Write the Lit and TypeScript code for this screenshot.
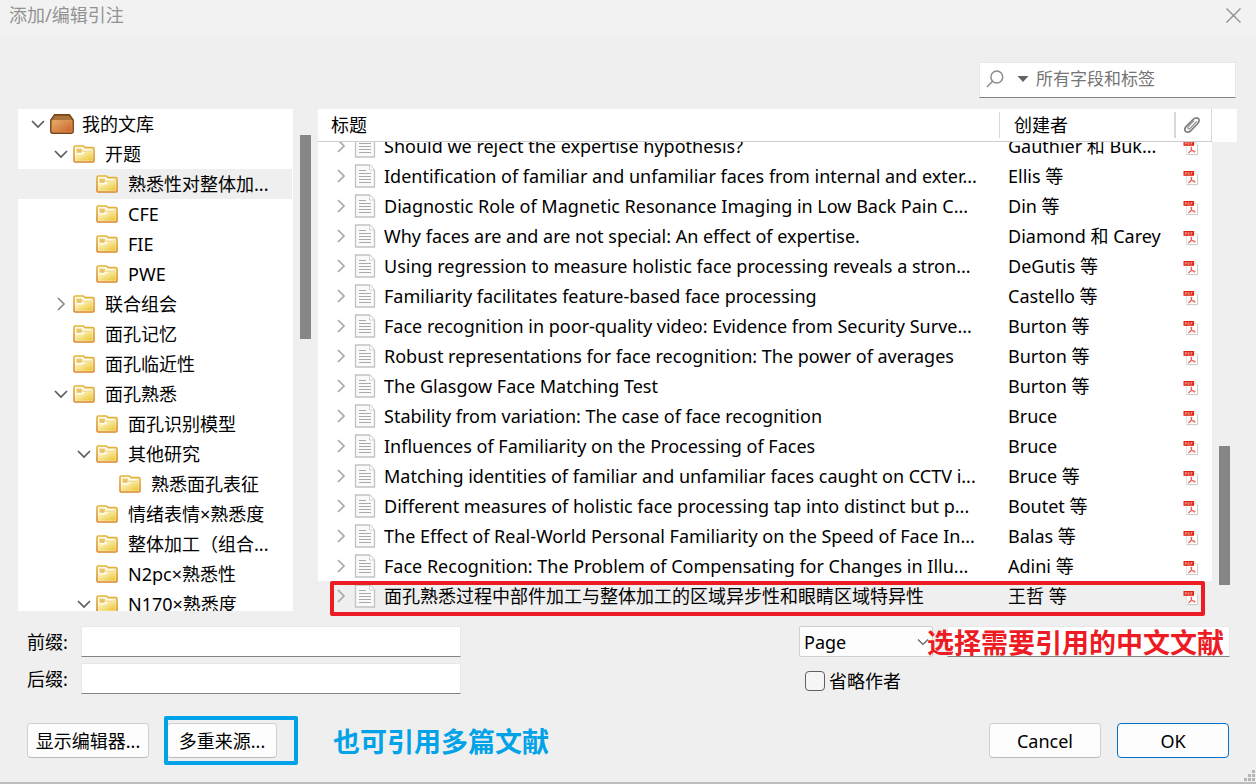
import { LitElement, html, css, svg, nothing } from "lit";
import { customElement, query } from "lit/decorators.js";
import { classMap } from "lit/directives/class-map.js";
import { styleMap } from "lit/directives/style-map.js";

interface TreeNode {
  label: string;
  level: number;
  state?: "open" | "closed";
  library?: boolean;
  selected?: boolean;
}

interface Item {
  title: string;
  creator: string;
  selected?: boolean;
}

const TREE: TreeNode[] = [
  { label: "我的文库", level: 0, state: "open", library: true },
  { label: "开题", level: 1, state: "open" },
  { label: "熟悉性对整体加...", level: 2, selected: true },
  { label: "CFE", level: 2 },
  { label: "FIE", level: 2 },
  { label: "PWE", level: 2 },
  { label: "联合组会", level: 1, state: "closed" },
  { label: "面孔记忆", level: 1 },
  { label: "面孔临近性", level: 1 },
  { label: "面孔熟悉", level: 1, state: "open" },
  { label: "面孔识别模型", level: 2 },
  { label: "其他研究", level: 2, state: "open" },
  { label: "熟悉面孔表征", level: 3 },
  { label: "情绪表情×熟悉度", level: 2 },
  { label: "整体加工（组合...", level: 2 },
  { label: "N2pc×熟悉性", level: 2 },
  { label: "N170×熟悉度", level: 2, state: "open" },
];

const ITEMS: Item[] = [
  { title: "Should we reject the expertise hypothesis?", creator: "Gauthier 和 Buk..." },
  { title: "Identification of familiar and unfamiliar faces from internal and exter...", creator: "Ellis 等" },
  { title: "Diagnostic Role of Magnetic Resonance Imaging in Low Back Pain C...", creator: "Din 等" },
  { title: "Why faces are and are not special: An effect of expertise.", creator: "Diamond 和 Carey" },
  { title: "Using regression to measure holistic face processing reveals a stron...", creator: "DeGutis 等" },
  { title: "Familiarity facilitates feature-based face processing", creator: "Castello 等" },
  { title: "Face recognition in poor-quality video: Evidence from Security Surve...", creator: "Burton 等" },
  { title: "Robust representations for face recognition: The power of averages", creator: "Burton 等" },
  { title: "The Glasgow Face Matching Test", creator: "Burton 等" },
  { title: "Stability from variation: The case of face recognition", creator: "Bruce" },
  { title: "Influences of Familiarity on the Processing of Faces", creator: "Bruce" },
  { title: "Matching identities of familiar and unfamiliar faces caught on CCTV i...", creator: "Bruce 等" },
  { title: "Different measures of holistic face processing tap into distinct but p...", creator: "Boutet 等" },
  { title: "The Effect of Real-World Personal Familiarity on the Speed of Face In...", creator: "Balas 等" },
  { title: "Face Recognition: The Problem of Compensating for Changes in Illu...", creator: "Adini 等" },
  { title: "面孔熟悉过程中部件加工与整体加工的区域异步性和眼睛区域特异性", creator: "王哲 等", selected: true },
];

const chevronDown = html`<svg width="16" height="16" viewBox="0 0 16 16" fill="none" stroke="#5c5c5c" stroke-width="1.7">
  <path d="M2 5l6 6 6-6" />
</svg>`;

const chevronRight = (color: string) => html`<svg width="16" height="16" viewBox="0 0 16 16" fill="none">
  <path d="M5 2l6 6-6 6" stroke=${color} stroke-width="1.7" />
</svg>`;

const libraryIcon = html`<svg width="24" height="20" viewBox="0 0 24 20">
  <defs>
    <linearGradient id="box" x1="0" y1="0" x2="1" y2="1">
      <stop offset="0" stop-color="#e8b06a" /><stop offset="1" stop-color="#c9622b" />
    </linearGradient>
  </defs>
  <path d="M4.500.7h15L23.300 6v11.500a1.800 1.800 0 0 1-1.800 1.800h-19A1.800 1.800 0 0 1 .7 17.500V6z" fill="#8c5620" stroke="#774415" stroke-width="1.200" />
  <path d="M5 2h14l2.200 3H2.800z" fill="#a8733c" />
  <rect x="2" y="6" width="20" height="12" rx="0.8" fill="url(#box)" stroke="#dc9455" stroke-width="0.9" />
</svg>`;

const folderIcon = html`<svg width="22" height="18" viewBox="0 0 22 18">
  <defs>
    <linearGradient id="fill" x1="0" y1="0" x2="1" y2="1">
      <stop offset="0.2" stop-color="#fdf0b8" /><stop offset="1" stop-color="#e8c42c" />
    </linearGradient>
    <linearGradient id="edge" x1="0" y1="0" x2="0" y2="1">
      <stop offset="0" stop-color="#e3b53c" /><stop offset="1" stop-color="#db8428" />
    </linearGradient>
  </defs>
  <path d="M1 2.200Q1 1 2.200 1h8.300l1.500 1.600h7.800Q21 2.600 21 3.800v12q0 1.200-1.200 1.200H2.200Q1 17 1 15.800z" fill="#fffbe6" stroke="url(#edge)" stroke-width="1.600" />
  <path d="M2.300 9.500h7.200L12 7h7.700v8.700H2.300z" fill="url(#fill)" />
  <path d="M3.300 4h5.400v2.200H19v-2" fill="none" stroke="#edcf74" />
  <rect x="3.500" y="4.200" width="5" height="3.600" fill="#e8c168" />
</svg>`;

const documentIcon = html`<svg width="22" height="24" viewBox="0 0 22 24">
  <path d="M1.500 1h14l5 5v17h-19z" fill="#fafafa" stroke="#c2c2c2" stroke-width="1.300" />
  <path d="M15.500 1v5h5" fill="#fff" stroke="#cfcfcf" />
  <path d="M5 6.500h7M5 9.500h12M5 12.500h12M5 15.500h12M5 18.500h12" stroke="#a9a9a9" stroke-width="1.200" />
</svg>`;

const pdfIcon = html`<svg width="16" height="16" viewBox="0 0 16 16">
  <path d="M3 1h8l4 3.500V15H3z" fill="#fff" />
  <path d="M11 1l4 3.500h-4z" fill="#e8e8e8" />
  <path d="M14.600 4.500V14.600H3.500" fill="none" stroke="#c9c9c9" />
  <path d="M3.500 6v8.500" stroke="#e3e3e3" />
  <rect x="0.500" y="1" width="10.500" height="4.800" fill="#e0200f" />
  <path d="M2.200 4.800V2.400h1.300v1.300H2.200M5 2.400v2.200h1q.7-1.100 0-2.200zM8 4.800V2.400h1.500M8 3.700h1.200" fill="none" stroke="#f8b4ac" stroke-width="0.7" />
  <path d="M8.300 7c1 0 .3 1.700-.2 3S6.600 13 5.700 12.900s.8-1.700 2.600-2.100 4 .2 3.900 1-2.300 0-3.300-1.700S7.700 7 8.300 7z" fill="none" stroke="#ea4a3e" stroke-width="0.9" />
</svg>`;

const clipIcon = html`<svg width="20" height="20" viewBox="0 0 20 20" fill="none" stroke-linecap="round">
  <path d="M4.800 10.800L11.200 4.300q3-2.600 5.200-.7 1.700 2.200-.8 5.200l-7.200 7.200q-2.600 2.200-4.800.4Q1.800 14 4 11.600l6.900-6.800" stroke="#808080" stroke-width="1.700" />
  <path d="M14.600 6.800l-6.500 6.600q-1.500 1-2.100 0-.7-1 .5-2.200l5.200-5.200" stroke="#989898" stroke-width="1.300" />
</svg>`;

@customElement("app-root")
export class AppRoot extends LitElement {
  @query(".viewport") private viewport!: HTMLElement;

  static styles = css`
    :host {
      display: flex;
      flex-direction: column;
      height: 100vh;
      min-height: 480px;
      overflow: hidden;
      box-sizing: border-box;
      background: #efefef;
      color: #000;
      font: 18px/30px "Noto Sans", "Noto Sans CJK SC", sans-serif;
    }
    * { box-sizing: border-box; }
    svg { display: block; flex: none; }
    button, input, select { font: inherit; color: inherit; margin: 0; }

    .titlebar {
      display: flex;
      justify-content: space-between;
      align-items: center;
      height: 37px;
      padding: 0 14px 7px 9px;
      background: #f2f2f2;
      color: #929292;
    }
    .titlebar h1 { margin: 0; font-size: 18px; font-weight: 400; }
    .close { border: 0; padding: 0; background: none; }

    .toolbar { display: flex; justify-content: flex-end; padding: 25px 20px 11px; }
    .search {
      display: flex;
      align-items: center;
      width: 257px;
      height: 36px;
      padding: 0 0 2px 6px;
      background: #fff;
      border: 1px solid #e8e8e8;
      border-bottom-color: #848484;
    }
    .search .arrow { margin: 0 6px 0 12px; }
    .search input {
      flex: 1;
      min-width: 0;
      border: 0;
      padding: 0;
      outline: 0;
      background: none;
      font-size: 17px;
    }
    .search input::placeholder { color: #757575; opacity: 1; }

    .panes { display: flex; flex: 1; min-height: 0; padding: 0 19px 0 18px; }
    .tree {
      flex: none;
      width: 275px;
      margin: 0;
      padding: 0 1px 0 0;
      list-style: none;
      overflow: hidden;
      background: #fff;
    }
    .node { display: flex; align-items: center; height: 30px; padding-left: 12px; white-space: nowrap; }
    .node.selected { background: #efefef; }
    .twisty { flex: none; width: 16px; height: 16px; margin-right: 4px; }
    .icon { flex: none; width: 24px; margin-right: 8px; }

    .track { display: flex; flex-direction: column; flex: none; width: 25px; padding: 26px 7px 0; }
    .thumb { width: 11px; height: 204px; background: #868686; }

    .list { position: relative; display: flex; flex: 1; min-width: 0; }
    .viewport { flex: 1; min-width: 0; overflow: hidden; background: #fff; }
    table { width: 100%; table-layout: fixed; border-collapse: separate; border-spacing: 0; }
    .col-creator { width: 176px; }
    .col-file { width: 36px; }
    th {
      position: sticky;
      top: 0;
      z-index: 1;
      height: 33px;
      padding: 0;
      background: #fff;
      border-bottom: 1px solid #cdcdcd;
      font-weight: 400;
      text-align: left;
    }
    .head { display: flex; align-items: center; height: 26px; padding-left: 13px; border-right: 1px solid #d8d8d8; }
    .head.wide { border-right-width: 2px; padding-left: 14px; }
    .head.file { padding-left: 6px; height: 32px; }
    td { height: 30px; padding: 0; overflow: hidden; white-space: nowrap; }
    tr.selected td { background: #efefef; }
    .title { display: flex; align-items: center; padding-left: 15px; height: 30px; }
    .title svg:first-child { margin-right: 5px; }
    .title svg + svg { margin-right: 8px; }
    td.creator { padding-left: 8px; }
    td.file { padding: 4px 0 0 7px; }
    .side { display: flex; flex-direction: column; flex: none; width: 25px; }
    .corner { height: 33px; background: #fff; }
    .side .room { flex: 1; }
    .side .thumb { height: 139px; margin: 0 7px 26px; }
    .mark-row {
      position: absolute;
      left: 12px;
      right: 32px;
      bottom: -5px;
      height: 35px;
      border: 4px solid #ed1c24;
      border-radius: 2px;
      z-index: 2;
    }

    .fields { display: flex; justify-content: space-between; padding: 15px 26px 0 27px; align-items: start; }
    .affixes { display: grid; grid-template-columns: 54px 380px; row-gap: 6px; align-items: center; }
    .text {
      width: 100%;
      height: 31px;
      padding: 0 8px;
      background: #fff;
      border: 1px solid #e8e8e8;
      border-bottom-color: #848484;
      border-radius: 0;
      outline: 0;
    }
    .locator { width: 431px; }
    .locator-row { position: relative; display: flex; gap: 14px; }
    .select { display: grid; flex: none; width: 134px; align-items: center; }
    .select select, .select svg { grid-area: 1 / 1; }
    .select svg { justify-self: end; margin-right: 3px; pointer-events: none; }
    select {
      appearance: none;
      height: 31px;
      padding: 0 4px;
      background: #fdfdfd;
      border: 1px solid #d0d0d0;
      border-radius: 2px;
    }
    .note { font-size: 27px; font-weight: 700; line-height: 32px; white-space: nowrap; font-family: "Noto Sans CJK SC", sans-serif; }
    .note.red { position: absolute; right: 6px; top: 0; color: #ed1c24; }
    .note.blue { color: #00a2e8; margin-left: 56px; }
    .check { display: flex; align-items: center; gap: 4px; margin: 9px 0 0 6px; }
    .check input {
      appearance: none;
      width: 20px;
      height: 20px;
      background: #f5f5f5;
      border: 1px solid #5f5f5f;
      border-radius: 4px;
    }

    .actions { display: flex; align-items: center; padding: 27px 27px 24px; }
    .btn {
      height: 35px;
      padding: 0;
      background: #fdfdfd;
      border: 1px solid #d0d0d0;
      border-bottom-color: #bababa;
      border-radius: 4px;
      white-space: nowrap;
    }
    .btn.editor { width: 122px; }
    .btn.dialog { width: 112px; }
    .btn.primary { border-color: #0070c8; }
    .marked { position: relative; margin-left: 18px; }
    .marked .btn { width: 110px; }
    .mark-button {
      position: absolute;
      inset: -7px -21px -7px -3px;
      border: 4px solid #00a2e8;
      border-radius: 2px;
      pointer-events: none;
    }
    .confirm { display: flex; gap: 16px; margin-left: auto; }
    .edge { position: relative; height: 2px; background: #bdbdbd; }
    .grip { position: absolute; right: 0; bottom: 2px; }
  `;

  async firstUpdated() {
    const toEnd = () => { this.viewport.scrollTop = this.viewport.scrollHeight; };
    toEnd();
    await document.fonts.ready;
    toEnd();
  }

  private renderNode(node: TreeNode) {
    return html`<li
      role="treeitem"
      aria-level=${node.level + 1}
      aria-selected=${node.selected ? "true" : "false"}
      class=${classMap({ node: true, selected: !!node.selected })}
      style=${styleMap({ paddingLeft: `${12 + node.level * 23}px` })}
    >
      <span class="twisty">${node.state === "open" ? chevronDown : node.state === "closed" ? chevronRight("#8a8a8a") : nothing}</span>
      <span class="icon">${node.library ? libraryIcon : folderIcon}</span>
      <span>${node.label}</span>
    </li>`;
  }

  private renderItem(item: Item) {
    return html`<tr class=${classMap({ selected: !!item.selected })}>
      <td><div class="title">${chevronRight("#a8a8a8")}${documentIcon}<span>${item.title}</span></div></td>
      <td class="creator">${item.creator}</td>
      <td class="file">${pdfIcon}</td>
    </tr>`;
  }

  private renderGrip() {
    const dots = [[8, 0], [4, 4], [8, 4], [0, 8], [4, 8], [8, 8]];
    return html`<svg class="grip" width="12" height="12" viewBox="0 0 12 12" fill="#b5b5b5">
      ${dots.map(([x, y]) => svg`<rect x=${x} y=${y} width="3" height="3" />`)}
    </svg>`;
  }

  render() {
    return html`
      <header class="titlebar">
        <h1>添加/编辑引注</h1>
        <button class="close" aria-label="Close">
          <svg width="17" height="17" viewBox="0 0 17 17" stroke="#8f8f8f" stroke-width="1.400"><path d="M1.500 1.500l14 14M15.500 1.500l-14 14" /></svg>
        </button>
      </header>

      <div class="toolbar">
        <label class="search">
          <svg width="18" height="18" viewBox="0 0 18 18" fill="none" stroke="#8c8c8c" stroke-width="1.500">
            <circle cx="10.800" cy="7" r="5.900" /><path d="M6.600 11.300L1 17" />
          </svg>
          <svg class="arrow" width="14" height="8" viewBox="0 0 14 8"><path d="M1.500 1h11L7 7z" fill="#636363" /></svg>
          <input type="search" aria-label="Search" placeholder="所有字段和标签" />
        </label>
      </div>

      <main class="panes">
        <ul class="tree" role="tree">${TREE.map((n) => this.renderNode(n))}</ul>
        <div class="track"><div class="thumb"></div></div>
        <section class="list">
          <div class="viewport">
            <table>
              <colgroup><col /><col class="col-creator" /><col class="col-file" /></colgroup>
              <thead>
                <tr>
                  <th><div class="head">标题</div></th>
                  <th><div class="head wide">创建者</div></th>
                  <th aria-label="Attachment"><div class="head file">${clipIcon}</div></th>
                </tr>
              </thead>
              <tbody>${ITEMS.map((i) => this.renderItem(i))}</tbody>
            </table>
          </div>
          <div class="side"><div class="corner"></div><div class="room"></div><div class="thumb"></div></div>
          <div class="mark-row"></div>
        </section>
      </main>

      <section class="fields">
        <div class="affixes">
          <label for="prefix">前缀:</label><input id="prefix" class="text" type="text" />
          <label for="suffix">后缀:</label><input id="suffix" class="text" type="text" />
        </div>
        <div class="locator">
          <div class="locator-row">
            <div class="select">
              <select aria-label="Locator"><option>Page</option></select>
              <svg width="14" height="14" viewBox="0 0 14 14" fill="none" stroke="#606060" stroke-width="1.200"><path d="M2 4.500l5 5 5-5" /></svg>
            </div>
            <input class="text" type="text" aria-label="Locator value" />
            <div class="note red">选择需要引用的中文文献</div>
          </div>
          <label class="check"><input type="checkbox" /><span>省略作者</span></label>
        </div>
      </section>

      <footer class="actions">
        <button class="btn editor">显示编辑器...</button>
        <div class="marked"><button class="btn">多重来源...</button><div class="mark-button"></div></div>
        <div class="note blue">也可引用多篇文献</div>
        <div class="confirm">
          <button class="btn dialog">Cancel</button>
          <button class="btn dialog primary">OK</button>
        </div>
      </footer>
      <div class="edge">${this.renderGrip()}</div>
    `;
  }
}
